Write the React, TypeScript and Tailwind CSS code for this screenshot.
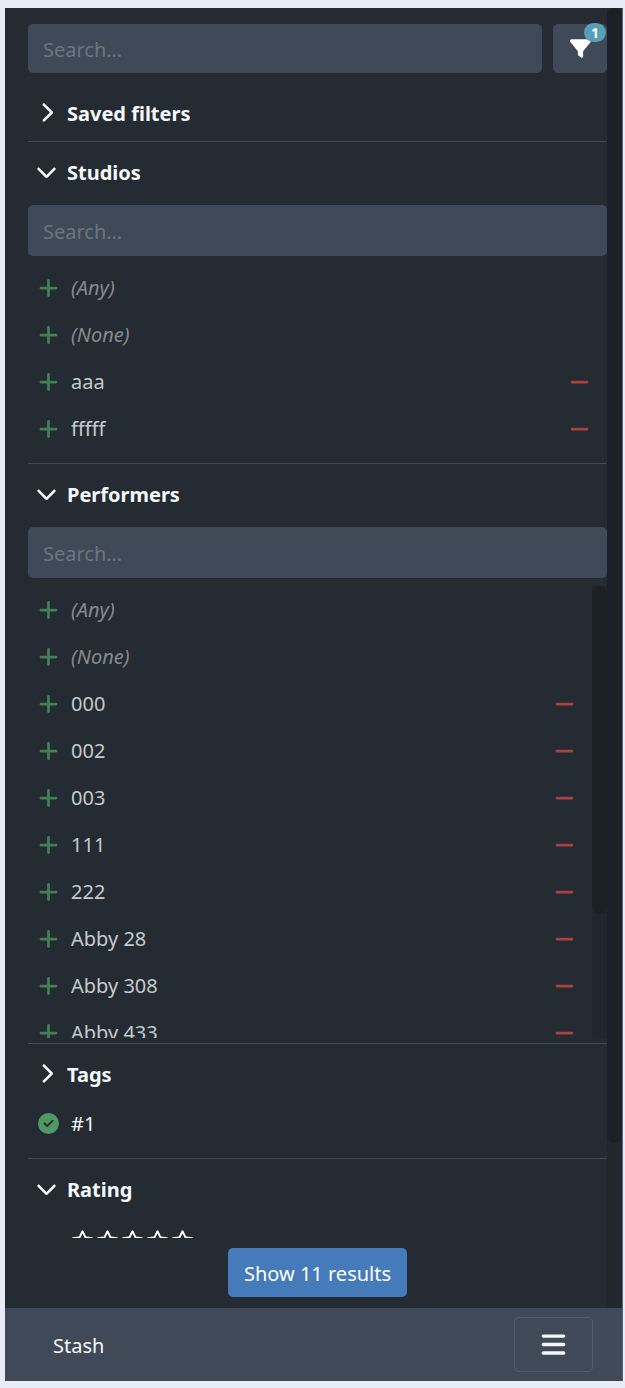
import { useState } from "react";
import {
  FaBars,
  FaChevronDown,
  FaChevronRight,
  FaCircleCheck,
  FaFilter,
  FaMinus,
  FaPlus,
  FaRegStar,
} from "react-icons/fa6";

type Option = { label: string; special?: boolean };

const anyNone: Option[] = [
  { label: "(Any)", special: true },
  { label: "(None)", special: true },
];

const studios: Option[] = [...anyNone, { label: "aaa" }, { label: "fffff" }];

const performers: Option[] = [
  ...anyNone,
  { label: "000" },
  { label: "002" },
  { label: "003" },
  { label: "111" },
  { label: "222" },
  { label: "Abby 28" },
  { label: "Abby 308" },
  { label: "Abby 433" },
];

function SectionHeader({ title, open }: { title: string; open?: boolean }) {
  return (
    <h2>
      <button
        type="button"
        aria-expanded={!!open}
        className="flex h-[58px] w-full items-center gap-[10px] pl-2 text-left text-[20px] font-bold text-[#f5f8fa]"
      >
        <span className="flex w-[21px] justify-center">
          {open ? <FaChevronDown size={21} /> : <FaChevronRight size={21} />}
        </span>
        <span className="pt-[3px]">{title}</span>
      </button>
    </h2>
  );
}

function SectionSearch({ label }: { label: string }) {
  return (
    <input
      type="text"
      aria-label={label}
      placeholder="Search…"
      className="mt-[5px] block h-[51px] w-full rounded-[5px] bg-[#3f4958] px-[15px] pt-[2px] text-[20px] text-white outline-none placeholder:text-[#6c757d]"
    />
  );
}

function OptionRow({ label, special }: Option) {
  return (
    <li className="flex h-[47px] items-center pr-[17px] pl-[10px]">
      <button type="button" className="flex flex-1 items-center gap-3 text-left">
        <span className="flex w-[21px] justify-center text-[#448056]">
          <FaPlus size={22} />
        </span>
        {special ? (
          <span className="pt-px text-[#848a90] italic">{label}</span>
        ) : (
          <span className="pt-px text-[#c6cacd]">{label}</span>
        )}
      </button>
      {!special && (
        <button
          type="button"
          aria-label={`Exclude ${label}`}
          className="flex w-[21px] justify-center text-[#ab423b]"
        >
          <FaMinus size={22} />
        </button>
      )}
    </li>
  );
}

export default function App() {
  const [query, setQuery] = useState("");

  return (
    <div className="min-h-screen bg-[#e8ecf6] pt-2 pr-[2px] pb-[7px] pl-[5px] font-['Noto_Sans','Open_Sans',sans-serif] text-[20px] leading-[28px]">
      <div className="border-r border-[#596270] bg-[#242b32]">
        <div className="flex">
          {/* Sidebar */}
          <aside className="min-w-0 flex-1 pt-4 pl-[23px]">
            <div className="mb-[10px] flex gap-[11px]">
              <input
                type="text"
                aria-label="Search"
                placeholder="Search…"
                value={query}
                onChange={(e) => setQuery(e.target.value)}
                className="h-[49px] min-w-0 flex-1 rounded-[5px] bg-[#3f4958] px-[15px] pt-[2px] text-[20px] text-white outline-none placeholder:text-[#6c757d]"
              />
              <button
                type="button"
                aria-label="Filters"
                className="relative flex h-[49px] w-[54px] items-center justify-center rounded-[5px] bg-[#3f4958] text-white"
              >
                <FaFilter size={21} />
                <span className="absolute -top-px right-px flex h-[19px] w-[22px] items-center justify-center rounded-full bg-[#579eb7] text-[14px] font-bold">
                  1
                </span>
              </button>
            </div>

            <section className="border-b border-[#3f4b5a]">
              <SectionHeader title="Saved filters" />
            </section>

            <section className="border-b border-[#3f4b5a] pb-[11px]">
              <SectionHeader title="Studios" open />
              <SectionSearch label="Search studios" />
              <ul className="mt-2">
                {studios.map((s) => (
                  <OptionRow key={s.label} {...s} />
                ))}
              </ul>
            </section>

            <section className="border-b border-[#3f4b5a] pb-[5px]">
              <SectionHeader title="Performers" open />
              <SectionSearch label="Search performers" />
              <div className="mt-2 flex h-[452px] overflow-hidden">
                <ul className="flex-1">
                  {performers.map((p) => (
                    <OptionRow key={p.label} {...p} />
                  ))}
                </ul>
                <div className="w-[15px] bg-[#20272e]">
                  <div className="h-[328px] rounded-lg bg-[#1c2027]" />
                </div>
              </div>
            </section>

            <section className="border-b border-[#3f4b5a] pb-[13px]">
              <SectionHeader title="Tags" />
              <button
                type="button"
                className="flex h-[43px] w-full items-center gap-3 pl-[10px] text-left text-[#f5f8fa]"
              >
                <FaCircleCheck size={21} className="text-[#4f9864]" />
                <span className="pt-px">#1</span>
              </button>
            </section>

            <section>
              <SectionHeader title="Rating" open />
              <div className="flex h-[21px] items-start overflow-hidden pt-3 pl-[43px] text-white">
                {[1, 2, 3, 4, 5].map((n) => (
                  <button key={n} type="button" aria-label={`${n} stars`} className="w-[25px]">
                    <FaRegStar size={23} />
                  </button>
                ))}
              </div>
            </section>

            <div className="flex justify-center pt-[10px] pb-[11px]">
              <button
                type="button"
                className="h-[49px] rounded-[5px] bg-[#457abb] px-4 pt-[2px] text-white"
              >
                Show 11 results
              </button>
            </div>
          </aside>

          {/* Page scrollbar */}
          <div className="w-[15px] bg-[#20272e]">
            <div className="h-[1135px] rounded-lg bg-[#1c2027]" />
          </div>
        </div>

        <nav className="flex h-[73px] items-center justify-between bg-[#3f4958] pr-[29px] pl-12">
          <a href="#" className="pt-[2px] text-[#f5f8fa]">
            Stash
          </a>
          <button
            type="button"
            aria-label="Menu"
            className="flex h-[55px] w-[79px] items-center justify-center rounded-[5px] border border-[#525c6a] text-[#f5f8fa]"
          >
            <FaBars size={27} />
          </button>
        </nav>
      </div>
    </div>
  );
}
